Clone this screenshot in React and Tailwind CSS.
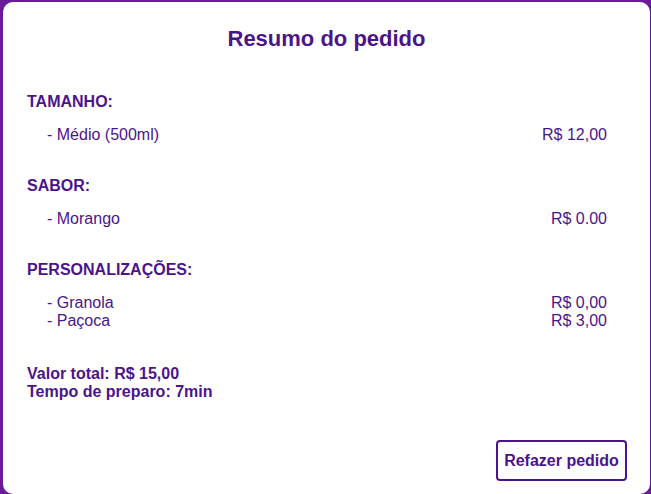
export default function App() {
  const c = "text-[#4a148c]";
  return (
    <div className="min-h-screen bg-[#6a1b9a] pt-[2px] pl-[3px]" style={{ fontFamily: '"Liberation Sans", Arial, sans-serif' }}>
      <div className={`bg-white rounded-[10px] w-[647px] h-[492px] px-6 pt-[24px] ${c}`}>
        <h1 className="text-center text-[22px] leading-[26px] font-bold">Resumo do pedido</h1>

        <div className="mt-[41px]">
          <h2 className="text-base leading-[18px] font-bold">TAMANHO:</h2>
          <div className="mt-[15px] ml-5 mr-[19px] flex justify-between text-base leading-[18px]">
            <span>- Médio (500ml)</span>
            <span>R$ 12,00</span>
          </div>
        </div>

        <div className="mt-[33px]">
          <h2 className="text-base leading-[18px] font-bold">SABOR:</h2>
          <div className="mt-[15px] ml-5 mr-[19px] flex justify-between text-base leading-[18px]">
            <span>- Morango</span>
            <span>R$ 0.00</span>
          </div>
        </div>

        <div className="mt-[33px]">
          <h2 className="text-base leading-[18px] font-bold">PERSONALIZAÇÕES:</h2>
          <div className="mt-[15px] ml-5 mr-[19px] flex flex-col text-base leading-[18px]">
            <div className="flex justify-between">
              <span>- Granola</span>
              <span>R$ 0,00</span>
            </div>
            <div className="flex justify-between">
              <span>- Paçoca</span>
              <span>R$ 3,00</span>
            </div>
          </div>
        </div>

        <div className="mt-[35px] text-base leading-[18px] font-bold">
          <p>Valor total: R$ 15,00</p>
          <p>Tempo de preparo: 7min</p>
        </div>

        <div className="mt-[39px] flex justify-end mr-[-1px]">
          <button className="h-[41px] w-[131px] border-2 border-[#4a148c] rounded-[4px] text-base font-bold text-[#4a148c] bg-white">
            Refazer pedido
          </button>
        </div>
      </div>
    </div>
  );
}
